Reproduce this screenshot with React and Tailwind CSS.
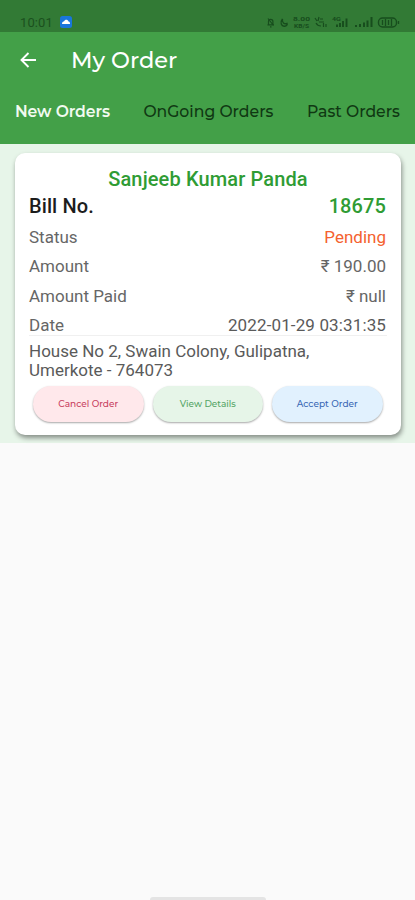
import React from 'react';

const tabs = [
  { label: 'New Orders', className: 'text-[#f1faf0] font-semibold tracking-[-0.1px]' },
  { label: 'OnGoing Orders', className: 'text-[#103813] font-medium' },
  { label: 'Past Orders', className: 'text-[#103813] font-medium' }
];

const rows = [
  { label: 'Status', value: 'Pending', color: 'text-[#f4612f]' },
  { label: 'Amount', value: '₹ 190.00', color: 'text-[#666]' },
  { label: 'Amount Paid', value: '₹ null', color: 'text-[#666]' },
  { label: 'Date', value: '2022-01-29 03:31:35', color: 'text-[#5a5a5a] tracking-[0.13px]' }
];

const actions = [
  { label: 'Cancel Order', className: 'bg-[#ffe8eb] text-[#c8405f]' },
  { label: 'View Details', className: 'bg-[#e6f5e8] text-[#55a566]' },
  { label: 'Accept Order', className: 'bg-[#e1f1fe] text-[#3a68b5]' }
];

const StatusIcons = () => (
  <svg width="134" height="14" viewBox="0 0 134 14" fill="none" stroke="#174d1d" strokeWidth="1.2">
    {/* Muted bell */}
    <path d="M1.500 9.800h6.500M2.500 9.500V6.500a2.200 2.200 0 0 1 4.400 0v3M2 3.500l5.500 7M4 11.800h1.500" />
    {/* Moon */}
    <path d="M16.500 4c-3 3.500-1 7.500 2 7.200 2.500-.3 3-1.700 2.500-2.700-2.500 1-5.500-1-4.500-4.500z" strokeWidth="1.400" />
    {/* Network speed */}
    <g fill="#174d1d" stroke="none" fontFamily="Roboto, sans-serif" fontWeight="700">
      <text x="27" y="6" fontSize="6" textLength="17" lengthAdjust="spacingAndGlyphs">8.00</text>
      <text x="28" y="13" fontSize="5" textLength="15" lengthAdjust="spacingAndGlyphs">KB/S</text>
      <text x="66" y="6" fontSize="6" textLength="9" lengthAdjust="spacingAndGlyphs">4G</text>
    </g>
    {/* Wifi calling */}
    <path d="M49 3l2 3M53 2l-1 4M50 8c1 2 3 3 5 3M54 4h3M53 7h5M57.500 8v4M60 9v3" />
    {/* Signal bars */}
    <path d="M71 9.500v2.500M74 8v4M77 6v6M80.500 3.500v8.500" strokeWidth="1.900" />
    <path d="M90 10v2M94 9v3M98 7.500v4.500M101.500 5.500v6.500M105.500 2v10" strokeWidth="2" />
    {/* Battery */}
    <rect x="112.500" y="3" width="18" height="9" rx="4" strokeWidth="1.400" />
    <path d="M116.500 5v5M119.500 4v7M122.500 5v5M125.500 4v7M132.500 6v3" strokeWidth="1.300" />
  </svg>
);

const StatusBar = () => (
  <div className="flex h-8 items-end justify-between bg-[#327a35] pl-5 pr-[15px] pb-[3px]">
    <div className="flex items-center">
      <span className="w-8 font-[Roboto,sans-serif] text-[13px] leading-[13px] tracking-[0.1px] text-[#1b501e]">10:01</span>
      <svg className="ml-[8px] mb-px" width="12" height="12" viewBox="0 0 12 12">
        <rect width="12" height="12" rx="2.500" fill="#1976dc" />
        <path d="M2 8c0-2 1-2.500 2-2.500.8-2.200 3.800-2.200 4.500 0C10 5.500 10 7 10 8z" fill="#fff" />
      </svg>
    </div>
    <StatusIcons />
  </div>
);

const Header = () => (
  <header className="h-28 bg-[#43a048] font-[Montserrat,Inter,sans-serif]">
    <div className="flex h-[55px] items-center pl-5">
      <svg width="16" height="16" viewBox="0 0 16 16" fill="none" stroke="#fff" strokeWidth="1.900">
        <path d="M16 8H2M8.500 1L1.500 8l7 7" />
      </svg>
      <h1 className="ml-[35px] whitespace-nowrap text-[22.500px] font-medium leading-7 text-white">My Order</h1>
    </div>
    <div className="flex h-[50px] items-center justify-between whitespace-nowrap px-[15px] text-[15.700px]">
      {tabs.map((tab) => (
        <span key={tab.label} className={tab.className}>{tab.label}</span>
      ))}
    </div>
  </header>
);

const OrderCard = () => (
  <div className="h-[282px] rounded-[10px] bg-white px-[14px] pt-[13px] font-[Roboto,sans-serif] shadow-[1px_3px_5px_rgba(0,0,0,0.42)]">
    <h2 className="h-[27px] text-center text-[20px] font-medium leading-[27px] tracking-[0.13px] text-[#2f9c34]">
      Sanjeeb Kumar Panda
    </h2>
    <div className="flex h-7 justify-between pr-px text-[20px] font-medium leading-[27px] tracking-[0.1px]">
      <span className="text-[#1c1c1c]">Bill No.</span>
      <span className="text-[#2f9c34]">18675</span>
    </div>
    <div className="pt-[2px]">
      {rows.map((row) => (
        <div key={row.label} className="flex h-[29.400px] items-center justify-between pr-px text-[17px]">
          <span className="text-[#666]">{row.label}</span>
          <span className={row.color}>{row.value}</span>
        </div>
      ))}
    </div>
    <div className="-mt-[6px] h-px bg-[#f0f0f0]" />
    <p className="mt-[6px] text-[17px] leading-[19px] text-[#5a5a5a]">
      House No 2, Swain Colony, Gulipatna,
      <br />
      Umerkote - 764073
    </p>
    <div className="mt-[6px] flex gap-[9px] pl-1">
      {actions.map((action) => (
        <button
          key={action.label}
          className={`h-9 w-[110.500px] rounded-full font-[Montserrat,Inter,sans-serif] text-[9px] font-medium shadow-[0_1px_2px_rgba(0,0,0,0.35)] ${action.className}`}
        >
          {action.label}
        </button>
      ))}
    </div>
  </div>
);

const App = () => {
  return (
    <div className="flex h-[900px] w-[415px] flex-col overflow-hidden bg-[#fafafa]">
      <StatusBar />
      <Header />
      <main className="h-[299px] bg-[#e7f5e9] pl-[15px] pr-[14px] pt-[9px]">
        <OrderCard />
      </main>
      {/* Gesture handle */}
      <div className="mx-auto mt-auto h-[3px] w-[116px] rounded-t-sm bg-[#e4e4e4]" />
    </div>
  );
};

export default App;
